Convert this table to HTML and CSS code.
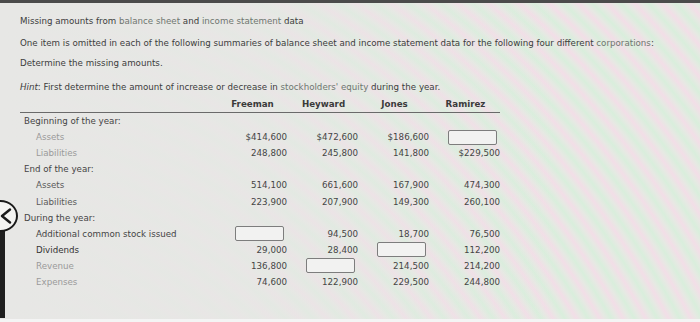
FILE: index.html
```html
<!DOCTYPE html>
<html>
<head>
<meta charset="utf-8">
<link rel="stylesheet" href="styles.css">
</head>
<body>
<div class="page">
  <p class="line l1">Missing amounts from <span class="soft">balance sheet</span> and <span class="soft">income statement</span> data</p>
  <p class="line l2">One item is omitted in each of the following summaries of balance sheet and income statement data for the following four different <span class="soft">corporations</span>:</p>
  <p class="line l3">Determine the missing amounts.</p>
  <p class="line l4"><em>Hint</em>: First determine the amount of increase or decrease in <span class="soft">stockholders' equity</span> during the year.</p>

  <div class="table">
    <div class="row head">
      <div class="lab"></div>
      <div class="hc">Freeman</div>
      <div class="hc">Heyward</div>
      <div class="hc">Jones</div>
      <div class="hc">Ramirez</div>
    </div>
    <div class="row"><div class="lab g1">Beginning of the year:</div><div></div><div></div><div></div><div></div></div>
    <div class="row"><div class="lab in2 pale">Assets</div><div class="num">$414,600</div><div class="num">$472,600</div><div class="num">$186,600</div><div class="num"><span class="box"></span></div></div>
    <div class="row"><div class="lab in2 pale">Liabilities</div><div class="num">248,800</div><div class="num">245,800</div><div class="num">141,800</div><div class="num">$229,500</div></div>
    <div class="row"><div class="lab g1">End of the year:</div><div></div><div></div><div></div><div></div></div>
    <div class="row"><div class="lab in2 mid">Assets</div><div class="num">514,100</div><div class="num">661,600</div><div class="num">167,900</div><div class="num">474,300</div></div>
    <div class="row"><div class="lab in2 mid">Liabilities</div><div class="num">223,900</div><div class="num">207,900</div><div class="num">149,300</div><div class="num">260,100</div></div>
    <div class="row"><div class="lab g1">During the year:</div><div></div><div></div><div></div><div></div></div>
    <div class="row"><div class="lab in2">Additional common stock issued</div><div class="num"><span class="box"></span></div><div class="num">94,500</div><div class="num">18,700</div><div class="num">76,500</div></div>
    <div class="row"><div class="lab in2 dark">Dividends</div><div class="num">29,000</div><div class="num">28,400</div><div class="num"><span class="box"></span></div><div class="num">112,200</div></div>
    <div class="row"><div class="lab in2 pale">Revenue</div><div class="num">136,800</div><div class="num"><span class="box"></span></div><div class="num">214,500</div><div class="num">214,200</div></div>
    <div class="row"><div class="lab in2 pale">Expenses</div><div class="num">74,600</div><div class="num">122,900</div><div class="num">229,500</div><div class="num">244,800</div></div>
  </div>

  <div class="topband"></div>
  <div class="leftstrip"></div>
  <div class="backbtn"><svg width="12" height="16" viewBox="0 0 12 16"><path d="M10 1.5 L2 8 L10 14.5" fill="none" stroke="#1a1a1a" stroke-width="2.4" stroke-linejoin="round" stroke-linecap="round"/></svg></div>
  <div class="bottomband"></div>
</div>
</body>
</html>
```

FILE: styles.css
```css
html, body {
  margin: 0;
  padding: 0;
}
body {
  width: 700px;
  height: 322px;
  overflow: hidden;
  font-family: "DejaVu Sans", Verdana, sans-serif;
  font-size: 8.7px;
  color: #3c3c3c;
}
.page {
  position: relative;
  width: 700px;
  height: 322px;
  box-sizing: border-box;
  padding: 15px 0 0 20px;
  background:
    linear-gradient(to right, #e7e7e5 0%, rgba(231,231,229,0.85) 35%, rgba(231,231,229,0.25) 65%, rgba(231,231,229,0) 80%),
    repeating-radial-gradient(circle at -150px 760px, #d9eedc 0px, #e6e9e3 5px, #f2dee7 10px, #e6e9e3 15px, #d9eedc 20px);
}
.line {
  margin: 0;
  line-height: 12px;
  white-space: nowrap;
}
.l2 { margin-top: 10px; }
.l3 { margin-top: 8px; }
.l4 { margin-top: 12px; }
.soft { color: #6f7670; }
em { font-style: italic; }

.table {
  margin-top: 6px;
  width: 480px;
}
.row {
  display: grid;
  grid-template-columns: 196px 71px 71px 71px 71px;
  height: 16.1px;
  align-items: center;
}
.row.head {
  height: 13px;
  border-bottom: 1px solid #6a6a6a;
  align-items: start;
}
.hc {
  text-align: center;
  font-weight: bold;
  color: #3a3a3a;
  padding-left: 2px;
}
.lab {
  white-space: nowrap;
  color: #444;
}
.g1 { padding-left: 4px; }
.in2 { padding-left: 16px; }
.pale { color: #9a9a9a; }
.mid { color: #5a5a5a; }
.dark { color: #333; }
.num {
  text-align: right;
  color: #454545;
  display: flex;
  justify-content: flex-end;
}
.box {
  display: block;
  width: 47px;
  height: 13px;
  border: 1px solid #7d7d7d;
  border-radius: 2px;
  background: #f2f2f1;
  margin-right: 3px;
}

.topband {
  position: absolute;
  left: 0;
  top: 0;
  width: 700px;
  height: 3px;
  background: #4b4b4b;
}
.leftstrip {
  position: absolute;
  left: 0;
  top: 205px;
  width: 5px;
  height: 113px;
  background: #1e1e1e;
}
.backbtn {
  position: absolute;
  left: -17px;
  top: 200px;
  width: 27px;
  height: 28px;
  border: 2px solid #1a1a1a;
  border-radius: 50%;
  background: #f4f4f2;
  display: flex;
  align-items: center;
  justify-content: flex-end;
  padding-right: 4px;
  box-sizing: content-box;
}
.bottomband {
  position: absolute;
  left: 0;
  bottom: 0;
  width: 700px;
  height: 3px;
  background: #f4f4f4;
}
```
